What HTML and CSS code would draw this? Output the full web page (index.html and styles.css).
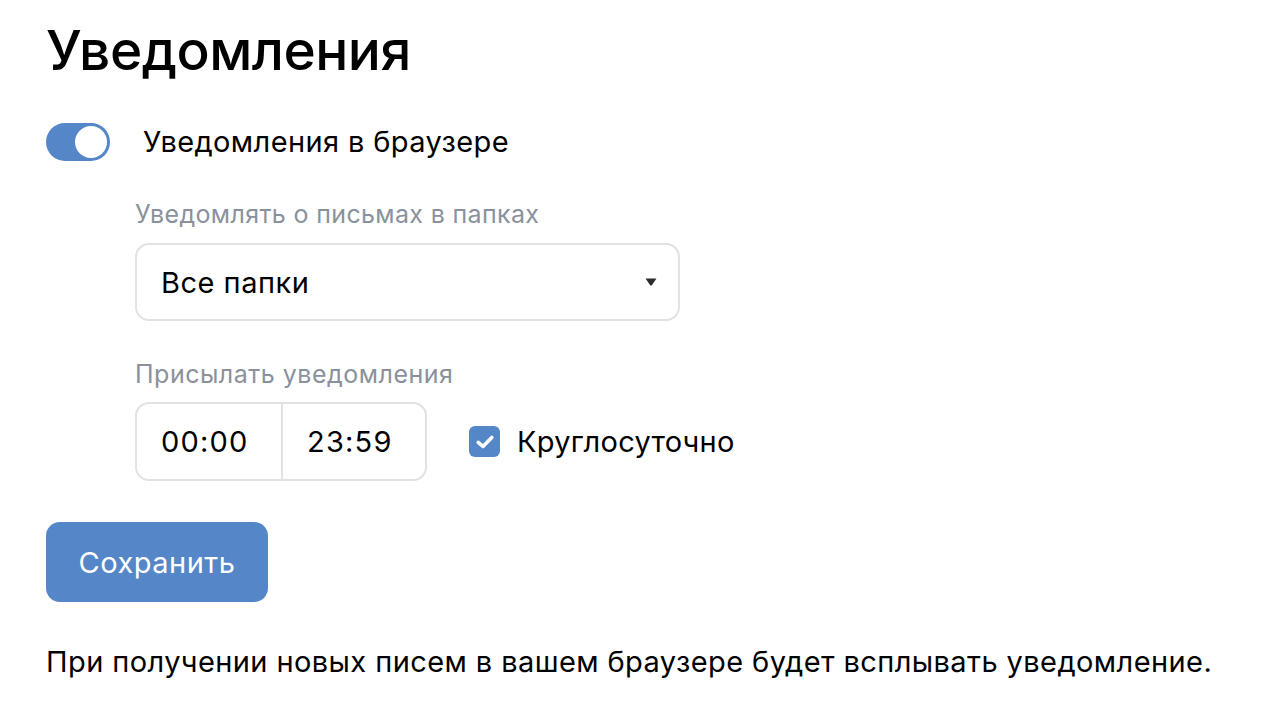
FILE: index.html
```html
<!DOCTYPE html>
<html lang="ru">
<head>
<meta charset="utf-8">
<title>Уведомления</title>
<link rel="stylesheet" href="styles.css">
</head>
<body>
<main class="page">
  <h1 class="title">Уведомления</h1>
  <div class="toggle-row">
    <span class="toggle"><span class="knob"></span></span>
    <span class="toggle-label">Уведомления в браузере</span>
  </div>
  <div class="options">
    <div class="field">
      <div class="field-label">Уведомлять о письмах в папках</div>
      <div class="select">
        <span class="select-value">Все папки</span>
        <svg class="caret" width="12" height="8" viewBox="0 0 12 8"><path d="M0.5 0.5 H11.5 L7 7 Q6 8 5 7 Z" fill="#2c2d2e"/></svg>
      </div>
    </div>
    <div class="field">
      <div class="field-label">Присылать уведомления</div>
      <div class="time-row">
        <div class="time-group">
          <span class="time">00:00</span>
          <span class="time">23:59</span>
        </div>
        <label class="check">
          <span class="box"><svg width="20" height="16" viewBox="0 0 20 16"><path d="M3.2 8.3 L8 12.4 L16.8 3.4" fill="none" stroke="#fff" stroke-width="3.6" stroke-linecap="round" stroke-linejoin="round"/></svg></span>
          <span class="check-label">Круглосуточно</span>
        </label>
      </div>
    </div>
  </div>
  <button class="save">Сохранить</button>
  <p class="note">При получении новых писем в вашем браузере будет всплывать уведомление.</p>
</main>
</body>
</html>
```

FILE: styles.css
```css
* { box-sizing: border-box; }
html, body { margin: 0; padding: 0; background: #fff; }
body {
  font-family: Inter, "Noto Sans", sans-serif;
  color: #000;
}
.page {
  padding: 18px 46px 0 46px;
}
.title {
  margin: 0;
  font-size: 55px;
  font-weight: 500;
  line-height: 64px;
  letter-spacing: -0.5px;
}
.toggle-row {
  display: flex;
  align-items: center;
  gap: 33px;
  margin-top: 41px;
  height: 38px;
}
.toggle {
  width: 64px;
  height: 38px;
  border-radius: 19px;
  background: #5587c8;
  position: relative;
  flex: none;
}
.knob {
  position: absolute;
  right: 3px;
  top: 3px;
  width: 32px;
  height: 32px;
  border-radius: 50%;
  background: #fff;
}
.toggle-label {
  font-size: 29px;
  line-height: 36px;
  letter-spacing: 0.38px;
}
.options {
  padding-left: 89px;
  margin-top: 39px;
}
.field-label {
  font-size: 25px;
  color: #8a919c;
  line-height: 28px;
  letter-spacing: 0.35px;
}
.select {
  margin-top: 15px;
  width: 545px;
  height: 78px;
  border: 2px solid #e2e2e4;
  border-radius: 14px;
  display: flex;
  align-items: center;
  justify-content: space-between;
  padding: 0 21px 0 24px;
}
.select-value { font-size: 29px; letter-spacing: 0.5px; }
.field + .field { margin-top: 39px; }
.field + .field .field-label { letter-spacing: 0.5px; }
.time-row {
  margin-top: 14px;
  display: flex;
  align-items: center;
  gap: 42px;
}
.time-group {
  display: flex;
  height: 79px;
  border: 2px solid #e2e2e4;
  border-radius: 14px;
}
.time {
  width: 144px;
  display: flex;
  align-items: center;
  padding-left: 24px;
  font-size: 29px;
  letter-spacing: 1.2px;
}
.time + .time { border-left: 2px solid #e2e2e4; }
.check {
  display: flex;
  align-items: center;
  gap: 17px;
}
.box {
  width: 31px;
  height: 31px;
  border-radius: 6px;
  background: #5587c8;
  display: flex;
  align-items: center;
  justify-content: center;
}
.check-label { font-size: 29px; letter-spacing: 0.25px; }
.save {
  display: block;
  margin-top: 41px;
  width: 222px;
  height: 80px;
  border: none;
  border-radius: 14px;
  background: #5587c8;
  color: #fff;
  font-family: inherit;
  font-size: 29px;
  letter-spacing: 0.5px;
}
.note {
  margin: 42px 0 0 0;
  font-size: 29px;
  line-height: 36px;
  letter-spacing: 0.41px;
}
```
